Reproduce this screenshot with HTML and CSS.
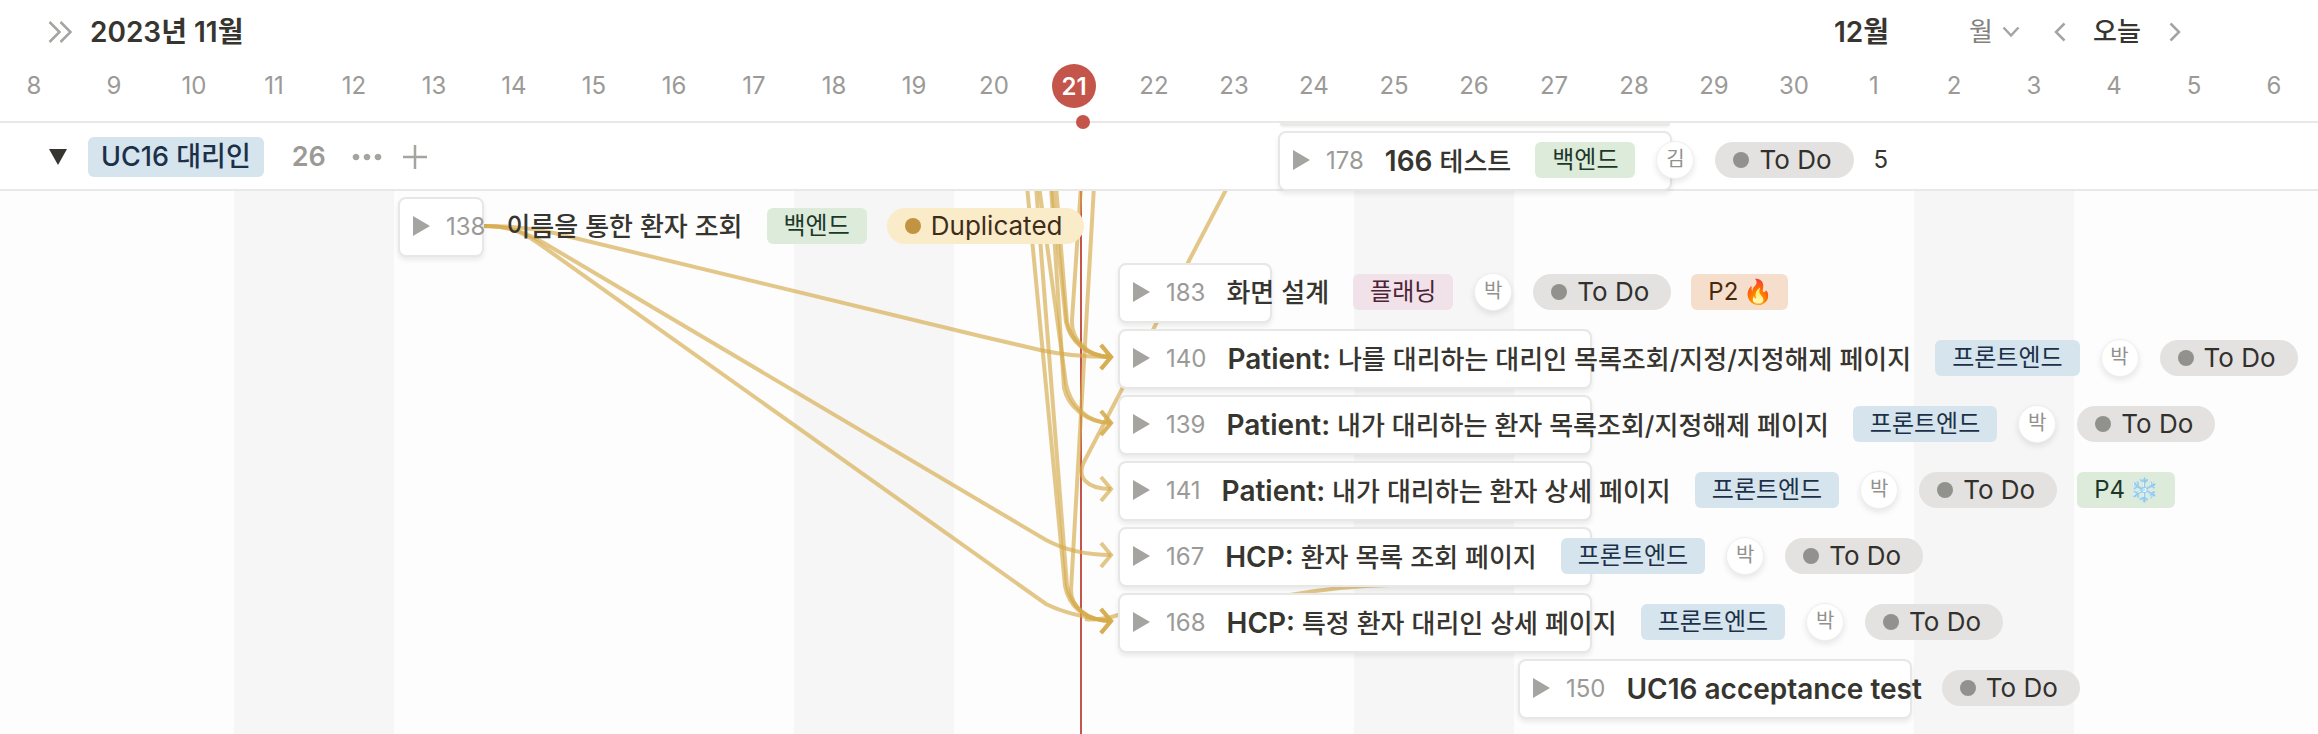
FILE: index.html
```html
<!DOCTYPE html>
<html lang="ko">
<head>
<meta charset="utf-8">
<title>UC16 대리인</title>
<link rel="stylesheet" href="styles.css">
</head>
<body>
<header class="calendar">
  <div class="months">
    <div class="month month-first">
      <button class="icon-btn" type="button" aria-label="펼치기"><svg width="24" height="24" viewBox="0 0 24 24"><path d="M1.500 2L11.500 12L1.500 22M12.500 2L22.500 12L12.500 22"/></svg></button>
      <h1 class="month-name">2023년 11월</h1>
    </div>
    <h2 class="month-name month-next">12월</h2>
    <div class="controls">
      <label class="scale">
        <select class="scale-select" aria-label="보기 단위"><option>월</option></select>
        <svg class="scale-arrow" width="18" height="12" viewBox="0 0 18 12"><path d="M1.500 1.500L9 9.500L16.500 1.500"/></svg>
      </label>
      <button class="icon-btn prev" type="button" aria-label="이전"><svg width="12" height="20" viewBox="0 0 12 20"><path d="M10.500 1.500L2 10L10.500 18.500"/></svg></button>
      <button class="today-btn" type="button">오늘</button>
      <button class="icon-btn next" type="button" aria-label="다음"><svg width="12" height="20" viewBox="0 0 12 20"><path d="M1.500 1.500L10 10L1.500 18.500"/></svg></button>
    </div>
  </div>
  <div class="days">
    <span>8</span><span>9</span><span>10</span><span>11</span><span>12</span><span>13</span><span>14</span><span>15</span><span>16</span><span>17</span><span>18</span><span>19</span><span>20</span><span><b class="today">21</b></span><span>22</span><span>23</span><span>24</span><span>25</span><span>26</span><span>27</span><span>28</span><span>29</span><span>30</span><span>1</span><span>2</span><span>3</span><span>4</span><span>5</span><span>6</span>
  </div>
  <i class="today-dot"></i>
</header>

<section class="group">
  <div class="group-head">
    <button class="icon-btn" type="button" aria-label="접기"><svg width="18" height="16" viewBox="0 0 18 16"><path class="solid dark" d="M0 0H18L9 16Z"/></svg></button>
    <span class="group-tag">UC16 대리인</span>
    <span class="group-count">26</span>
    <button class="icon-btn more" type="button" aria-label="더 보기"><svg width="30" height="8" viewBox="0 0 30 8"><path class="solid" d="M4 .7a3.300 3.300 0 1 0 .01 0ZM15 .7a3.300 3.300 0 1 0 .01 0ZM26 .7a3.300 3.300 0 1 0 .01 0Z"/></svg></button>
    <button class="icon-btn add" type="button" aria-label="추가"><svg width="24" height="24" viewBox="0 0 24 24"><path d="M12 0V24M0 12H24"/></svg></button>
  </div>
  <div class="group-items">
    <div class="edge" style="--start:16;--span:5"></div>
    <article class="card" style="--start:16;--span:5">
      <svg class="tri" width="17" height="20" viewBox="0 0 17 20"><path class="solid" d="M0 0L17 10L0 20Z"/></svg>
      <span class="num">178</span><strong class="title"><span class="latin">166</span> 테스트</strong><span class="tag green">백엔드</span><span class="avatar">김</span><span class="status">To Do</span><span class="points">5</span>
    </article>
  </div>
</section>

<main class="timeline">
  <i class="today-line"></i>
  <svg class="links" width="2318" height="543" viewBox="0 191 2318 543">
    <path d="M1027 186L1065 586C1069 606 1084 621 1111 621"/>
    <path d="M1036 186L1067 586C1071 606 1086 621 1111 621"/>
    <path d="M1039 186L1066 384C1070 404 1086 423 1111 423"/>
    <path d="M1051 186L1064 388C1068 406 1086 423 1111 423"/>
    <path d="M1052 186L1066 322C1070 340 1086 357 1111 357"/>
    <path d="M1056 186L1067 322C1071 340 1086 357 1111 357"/>
    <path d="M1081 186L1072 320C1071 338 1086 357 1111 357"/>
    <path d="M1094 186L1071 590C1071 606 1086 621 1111 621"/>
    <path d="M1228 186L1085 460C1075 478 1088 489 1111 489"/>
    <path d="M484 226C500 226 520 226 554 233L980 336L1040 350Q1072 357 1111 357"/>
    <path d="M484 226C512 226 528 234 544 243L1046 540Q1074 555 1111 555"/>
    <path d="M484 226C510 226 522 232 538 243L1046 604Q1070 616 1111 621"/>
    <path d="M1390 585Q1340 586 1290 595L1118 615Q1100 621 1085 619"/>
    <g class="heads">
      <path d="M1101 345L1111 357L1101 369"/><path d="M1101 345L1111 357L1101 369"/><path d="M1101 345L1111 357L1101 369"/>
      <path d="M1101 411L1111 423L1101 435"/><path d="M1101 411L1111 423L1101 435"/>
      <path d="M1101 477L1111 489L1101 501"/>
      <path d="M1101 543L1111 555L1101 567"/>
      <path d="M1101 609L1111 621L1101 633"/><path d="M1101 609L1111 621L1101 633"/><path d="M1101 609L1111 621L1101 633"/>
    </g>
  </svg>
  <div class="rows">
    <article class="card" style="--start:5;--span:1">
      <svg class="tri" width="17" height="20" viewBox="0 0 17 20"><path class="solid" d="M0 0L17 10L0 20Z"/></svg>
      <span class="num">138</span><strong class="title">이름을 통한 환자 조회</strong><span class="tag green">백엔드</span><span class="status yellow">Duplicated</span>
    </article>
    <article class="card" style="--start:14;--span:2">
      <svg class="tri" width="17" height="20" viewBox="0 0 17 20"><path class="solid" d="M0 0L17 10L0 20Z"/></svg>
      <span class="num">183</span><strong class="title">화면 설계</strong><span class="tag pink">플래닝</span><span class="avatar">박</span><span class="status">To Do</span><span class="tag orange">P2 <span class="emoji">🔥</span></span>
    </article>
    <article class="card" style="--start:14;--span:6">
      <svg class="tri" width="17" height="20" viewBox="0 0 17 20"><path class="solid" d="M0 0L17 10L0 20Z"/></svg>
      <span class="num">140</span><strong class="title"><span class="latin">Patient:</span> 나를 대리하는 대리인 목록조회/지정/지정해제 페이지</strong><span class="tag blue">프론트엔드</span><span class="avatar">박</span><span class="status">To Do</span>
    </article>
    <article class="card" style="--start:14;--span:6">
      <svg class="tri" width="17" height="20" viewBox="0 0 17 20"><path class="solid" d="M0 0L17 10L0 20Z"/></svg>
      <span class="num">139</span><strong class="title"><span class="latin">Patient:</span> 내가 대리하는 환자 목록조회/지정해제 페이지</strong><span class="tag blue">프론트엔드</span><span class="avatar">박</span><span class="status">To Do</span>
    </article>
    <article class="card" style="--start:14;--span:6">
      <svg class="tri" width="17" height="20" viewBox="0 0 17 20"><path class="solid" d="M0 0L17 10L0 20Z"/></svg>
      <span class="num">141</span><strong class="title"><span class="latin">Patient:</span> 내가 대리하는 환자 상세 페이지</strong><span class="tag blue">프론트엔드</span><span class="avatar">박</span><span class="status">To Do</span><span class="tag green">P4 <span class="emoji">❄️</span></span>
    </article>
    <article class="card" style="--start:14;--span:6">
      <svg class="tri" width="17" height="20" viewBox="0 0 17 20"><path class="solid" d="M0 0L17 10L0 20Z"/></svg>
      <span class="num">167</span><strong class="title"><span class="latin">HCP:</span> 환자 목록 조회 페이지</strong><span class="tag blue">프론트엔드</span><span class="avatar">박</span><span class="status">To Do</span>
    </article>
    <article class="card" style="--start:14;--span:6">
      <svg class="tri" width="17" height="20" viewBox="0 0 17 20"><path class="solid" d="M0 0L17 10L0 20Z"/></svg>
      <span class="num">168</span><strong class="title"><span class="latin">HCP:</span> 특정 환자 대리인 상세 페이지</strong><span class="tag blue">프론트엔드</span><span class="avatar">박</span><span class="status">To Do</span>
    </article>
    <article class="card" style="--start:19;--span:5">
      <svg class="tri" width="17" height="20" viewBox="0 0 17 20"><path class="solid" d="M0 0L17 10L0 20Z"/></svg>
      <span class="num">150</span><strong class="title"><span class="latin">UC16 acceptance test</span></strong><span class="status">To Do</span>
    </article>
  </div>
</main>
</body>
</html>
```
FILE: styles.css
```css
:root {
  --day: 80px;
  --origin: -6px;
  --text: #37352f;
  --muted: #9b9a97;
  --line: #e8e8e7;
  --red: #c4554a;
}

* { box-sizing: border-box; }

body {
  margin: 0;
  min-height: 100vh;
  display: flex;
  flex-direction: column;
  overflow: hidden;
  background: #fff;
  color: var(--text);
  font-family: Inter, "Noto Sans CJK KR", "Noto Color Emoji", sans-serif;
  font-size: 24px;
  line-height: 36px;
  white-space: nowrap;
}

button, select {
  font: inherit;
  color: inherit;
  border: 0;
  padding: 0;
  background: none;
  appearance: none;
}

svg { display: block; flex: none; fill: none; stroke: #a5a4a0; stroke-width: 2.5; }
.solid { fill: #a5a4a0; stroke: none; }
.dark { fill: var(--text); }
.icon-btn { display: flex; align-items: center; }

/* Header */
.calendar {
  position: relative;
  padding-top: 12px;
  border-bottom: 2px solid var(--line);
}
.months, .days {
  display: grid;
  grid-template-columns: repeat(29, var(--day));
  margin-left: var(--origin);
}
.months { height: 40px; align-items: center; }
.month { display: flex; align-items: center; }
.month-first { grid-column: 1 / 24; padding-left: 54px; gap: 18px; }
.month-next { grid-column: 24; }
.month-name { margin: 0; font-size: 28px; font-weight: 600; line-height: 40px; }
.controls { grid-column: 25 / 30; display: flex; align-items: center; padding-left: 55px; font-size: 26px; }
.scale { display: flex; align-items: center; gap: 9px; color: #82817d; }
.prev { margin-left: 34px; }
.today-btn { margin: 0 28px 0 27px; font-weight: 500; }
.days { height: 69px; padding-top: 11px; color: var(--muted); }
.days span { height: 44px; padding-top: 1px; display: flex; align-items: center; justify-content: center; }
.today {
  width: 44px;
  height: 44px;
  border-radius: 50%;
  background: var(--red);
  color: #fff;
  font-weight: 600;
  line-height: 45px;
  text-align: center;
}
.today-dot {
  position: absolute;
  left: 1076px;
  bottom: -8px;
  z-index: 2;
  width: 14px;
  height: 14px;
  border-radius: 50%;
  background: var(--red);
}

/* Group row */
.group { display: grid; height: 68px; border-bottom: 2px solid var(--line); }
.group-head, .group-items { grid-area: 1 / 1; }
.group-head { display: flex; align-items: center; padding-left: 49px; }
.group-tag {
  margin-left: 21px;
  padding: 0 13px;
  border-radius: 6px;
  background: #d6e4ee;
  color: #1c3149;
  font-size: 27px;
  font-weight: 500;
  line-height: 40px;
}
.group-count { margin-left: 28px; color: var(--muted); font-size: 27px; font-weight: 600; }
.more { margin-left: 26px; }
.add { margin-left: 21px; }
.edge {
  width: calc(var(--span) * var(--day) - 10px);
  height: 3px;
  margin: 0 0 5px calc(var(--origin) + var(--start) * var(--day) + 6px);
  border-radius: 0 0 6px 6px;
  background: #e9e9e8;
  box-shadow: 0 1px 3px rgba(0, 0, 0, .08);
}

/* Timeline */
.timeline {
  position: relative;
  flex: 1;
  background: repeating-linear-gradient(90deg, #f6f6f6 0 160px, #fdfdfd 160px 560px) 234px 0 / 560px 100%;
}
.today-line { position: absolute; left: 1080px; top: 0; bottom: 0; width: 2px; background: var(--red); }
.links { position: absolute; left: 0; top: 0; }
.links path { stroke: #d5aa4b; stroke-opacity: .65; stroke-width: 4; }
.rows { position: relative; display: grid; gap: 6px; padding: 6px 0; }

.card {
  position: relative;
  z-index: 1;
  display: flex;
  align-items: center;
  gap: 20px;
  width: calc(var(--span) * var(--day) - 6px);
  min-width: 86px;
  height: 60px;
  margin-left: calc(var(--origin) + var(--start) * var(--day) + 4px);
  padding: 0 0 2px 13px;
  border: 2px solid #e7e7e6;
  border-radius: 8px;
  background: #fff;
  background-clip: padding-box;
  box-shadow: 0 3px 5px rgba(15, 15, 15, .08);
}
.card > * { flex: none; }
.tri { margin-right: -4px; }
.num { padding-top: 2px; color: var(--muted); }
.title { padding: 2px 0 0 1px; font-size: 26px; font-weight: 500; }
.title + .tag { margin-left: 4px; }
.latin { font-size: 28px; font-weight: 600; }
.tag { padding: 0 17px; border-radius: 6px; }
.emoji { margin: 0 -2px; }
.green { background: #ddebdb; color: #1c3829; }
.blue { background: #d6e4ee; color: #1c3149; }
.pink { background: #f1e1e9; color: #4c2337; }
.orange { background: #f6decc; color: #49290e; }
.avatar {
  width: 38px;
  height: 38px;
  margin: 0 1px;
  border: 1px solid #efefee;
  border-radius: 50%;
  background: #fff;
  box-shadow: 0 3px 6px rgba(15, 15, 15, .1);
  color: #91918e;
  font-size: 20px;
  line-height: 34px;
  text-align: center;
}
.status {
  display: flex;
  align-items: center;
  gap: 10px;
  padding: 0 22px 0 18px;
  border-radius: 18px;
  background: #e3e2e0;
  color: #32302c;
  font-size: 26px;
}
.status::before { content: ""; width: 16px; height: 16px; border-radius: 50%; background: #91918e; }
.yellow { background: #faecc9; color: #402c1b; }
.yellow::before { background: #c29343; }
```
